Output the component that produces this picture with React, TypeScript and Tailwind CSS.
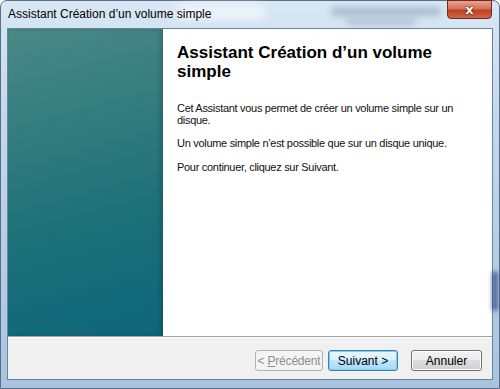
import React from "react";

export default function App() {
  return (
    <div className="w-[500px] h-[389px] overflow-hidden bg-white" style={{ fontFamily: '"Liberation Sans", Arial, sans-serif' }}>
      <div className="relative w-[500px] h-[389px] flex flex-col rounded-t-[7px] border border-[#5a6f86] bg-[linear-gradient(180deg,#d9e7f4_0%,#c3d8ec_30%,#b3cde6_70%,#a8c4e2_100%)]">
        {/* blurred background through glass */}
        <div className="absolute left-[175px] top-[4px] w-[90px] h-[14px] rounded-full bg-white/60 blur-[5px]" />
        <div className="absolute left-[330px] top-[6px] w-[110px] h-[9px] rounded-full bg-[#8fa3b8]/60 blur-[3px]" />
        <div className="absolute left-[345px] top-[17px] w-[70px] h-[7px] rounded-full bg-[#8fa3b8]/50 blur-[3px]" />
        <div className="absolute right-[1px] top-[270px] w-[6px] h-[40px] rounded-full bg-[#243a7a]/70 blur-[2px]" />

        {/* title bar */}
        <div className="relative h-[27px] flex items-start shrink-0">
          <span className="ml-[7px] mt-[6px] text-[12px] leading-[14px] text-black">Assistant Création d’un volume simple</span>
          <div className="absolute right-[7px] top-[-1px] w-[45px] h-[19px] rounded-b-[4px] border border-[#6b2a20] bg-[linear-gradient(180deg,#e9a392_0%,#d6705a_45%,#c2401f_55%,#d0654a_100%)] flex items-center justify-center">
            <span className="text-white text-[13px] font-bold leading-none" style={{ fontFamily: '"DejaVu Sans", sans-serif', textShadow: "0 0 2px #3a1008, 0 0 1px #3a1008" }}>x</span>
          </div>
        </div>

        {/* client */}
        <div className="flex-1 flex px-[6px] pb-[8px]">
          <div className="flex-1 flex flex-col border border-[#6d8399] bg-[#f0f0f0]">
            <div className="h-[307px] flex">
              <div className="w-[155px] shrink-0 bg-[linear-gradient(165deg,#4a8986_0%,#347d7e_30%,#1b6f78_65%,#0e667a_100%)] shadow-[inset_-3px_0_4px_rgba(0,0,0,0.15)]" />
              <div className="flex-1 bg-white pl-[14px] pt-[14px] pr-[20px]">
                <h1 className="text-[17px] leading-[19px] font-bold text-black w-[290px]" style={{ fontFamily: '"Liberation Sans", Arial, sans-serif' }}>
                  Assistant Création d’un volume simple
                </h1>
                <div className="mt-[21px] text-[11px] leading-[12px] tracking-[-0.3px] text-[#111]">
                  <p className="w-[284px]">Cet Assistant vous permet de créer un volume simple sur un disque.</p>
                  <p className="mt-[11px]">Un volume simple n’est possible que sur un disque unique.</p>
                  <p className="mt-[12px]">Pour continuer, cliquez sur Suivant.</p>
                </div>
              </div>
            </div>
            <div className="h-[1px] bg-[#a0a0a0]" />
            <div className="h-[1px] bg-white" />
            <div className="flex-1 flex justify-end items-start pt-[12px] pr-[10px] text-[12px] whitespace-nowrap">
              <button className="w-[68px] h-[21px] rounded-[3px] border border-[#adb2b5] bg-[#f4f4f4] text-[#8d8d8d] leading-none tracking-[-0.2px]">
                &lt; <span className="underline">P</span>récédent
              </button>
              <button className="ml-[5px] w-[70px] h-[21px] rounded-[3px] border border-[#3c7fb1] bg-[linear-gradient(180deg,#eaf6fd_0%,#d9f0fc_50%,#bee6fd_50%,#a7d9f5_100%)] shadow-[inset_0_0_0_1px_#7ad0f3] text-black leading-none">
                Suivant &gt;
              </button>
              <button className="ml-[13px] w-[71px] h-[21px] rounded-[3px] border border-[#707070] bg-[linear-gradient(180deg,#f2f2f2_0%,#ebebeb_50%,#dddddd_50%,#cfcfcf_100%)] shadow-[inset_0_0_0_1px_#fcfcfc] text-black leading-none">
                Annuler
              </button>
            </div>
          </div>
        </div>
      </div>
    </div>
  );
}
